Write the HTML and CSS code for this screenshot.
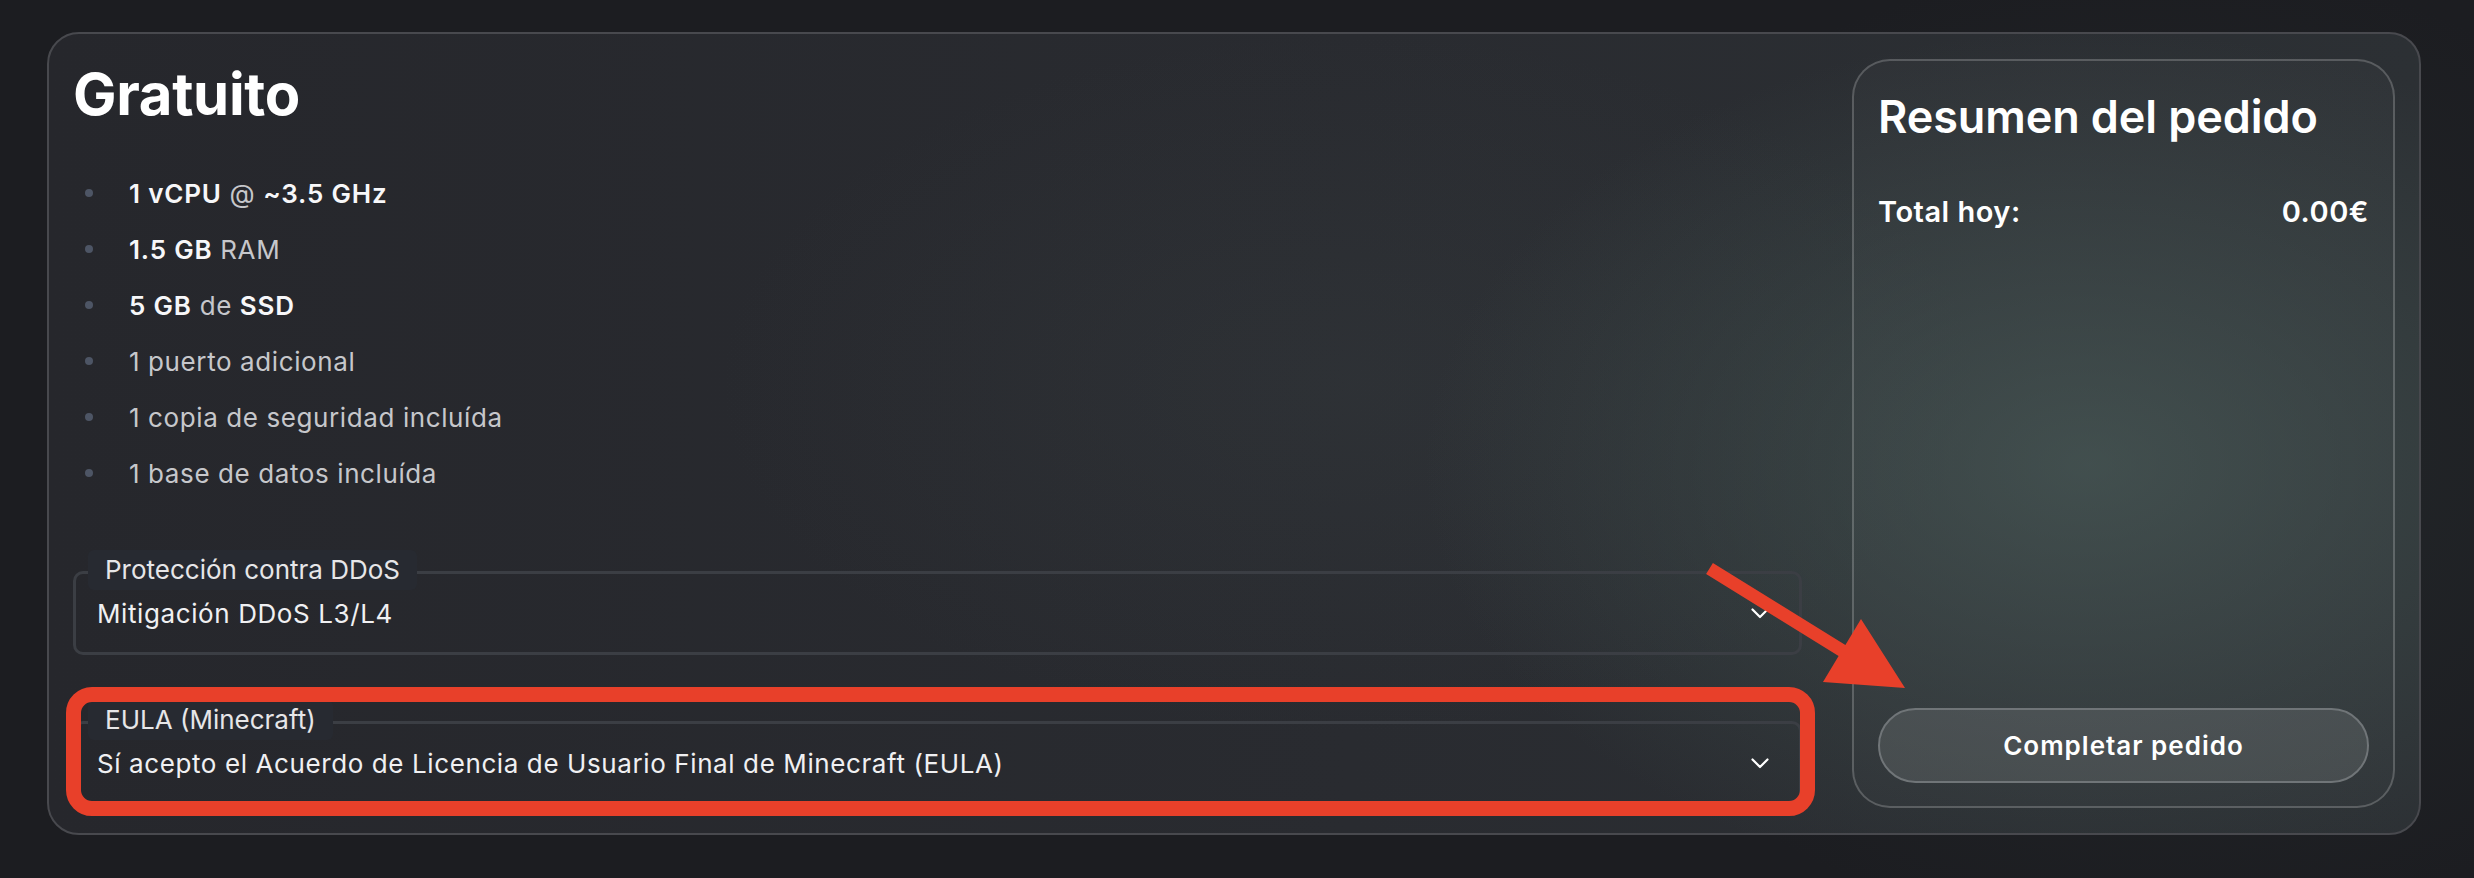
FILE: index.html
```html
<!DOCTYPE html>
<html lang="es">
<head>
<meta charset="utf-8">
<title>Pedido</title>
<link rel="stylesheet" href="styles.css">
</head>
<body>
<div class="card">
  <div class="main">
    <h1 class="plan">Gratuito</h1>
    <ul class="features">
      <li><span class="dot"></span><span><b>1 vCPU</b> @ <b>~3.5 GHz</b></span></li>
      <li><span class="dot"></span><span><b>1.5 GB</b> RAM</span></li>
      <li><span class="dot"></span><span><b>5 GB</b> de <b>SSD</b></span></li>
      <li><span class="dot"></span><span>1 puerto adicional</span></li>
      <li><span class="dot"></span><span>1 copia de seguridad incluída</span></li>
      <li><span class="dot"></span><span>1 base de datos incluída</span></li>
    </ul>
    <fieldset class="field field-ddos">
      <legend><span class="legend-text">Protección contra DDoS</span></legend>
      <div class="select">
        <span class="select-value">Mitigación DDoS L3/L4</span>
        <svg class="chev" width="18" height="11" viewBox="0 0 18 11"><path d="M1.5 1.5 L9 9 L16.5 1.5" fill="none" stroke="#ffffff" stroke-width="2.2" stroke-linecap="round" stroke-linejoin="round"/></svg>
      </div>
    </fieldset>
    <div class="highlight">
      <fieldset class="field">
        <legend><span class="legend-text">EULA (Minecraft)</span></legend>
        <div class="select">
          <span class="select-value">Sí acepto el Acuerdo de Licencia de Usuario Final de Minecraft (EULA)</span>
          <svg class="chev" width="18" height="11" viewBox="0 0 18 11"><path d="M1.5 1.5 L9 9 L16.5 1.5" fill="none" stroke="#ffffff" stroke-width="2.2" stroke-linecap="round" stroke-linejoin="round"/></svg>
        </div>
      </fieldset>
    </div>
  </div>
  <aside class="summary">
    <h2 class="summary-title">Resumen del pedido</h2>
    <div class="total"><span>Total hoy:</span><span>0.00€</span></div>
    <button class="submit" type="button">Completar pedido</button>
  </aside>
  <svg class="arrow" width="215" height="145" viewBox="0 0 215 145">
    <polygon points="15.9,11 148.4,93 164,67 208,136 126,130 141.6,104 9.1,22" fill="#e8402a"/>
  </svg>
</div>
</body>
</html>
```

FILE: styles.css
```css
* { box-sizing: border-box; }

html, body {
  margin: 0;
  padding: 0;
}

body {
  width: 2474px;
  height: 878px;
  overflow: hidden;
  background:
    radial-gradient(ellipse 900px 700px at 2150px 450px, rgba(50, 60, 60, 0.35), rgba(50, 60, 60, 0) 70%),
    #1c1d21;
  font-family: Inter, "Noto Sans", "Liberation Sans", sans-serif;
  color: #f2f2f4;
  padding: 32px 53px 0 47px;
}

.card {
  position: relative;
  height: 803px;
  border: 2px solid #48494e;
  border-radius: 32px;
  padding: 25px 24px 25px 24px;
  display: grid;
  grid-template-columns: 1fr 543px;
  column-gap: 50px;
  background:
    radial-gradient(ellipse 950px 620px at 2040px 430px, rgba(74, 94, 90, 0.6), rgba(74, 94, 90, 0) 70%),
    radial-gradient(ellipse 900px 500px at 1300px 350px, rgba(60, 68, 70, 0.25), rgba(60, 68, 70, 0) 70%),
    linear-gradient(90deg, #26272c 0%, #292b30 55%, #2c3034 100%);
}

.main {
  min-width: 0;
  display: flex;
  flex-direction: column;
}

.plan {
  margin: 0;
  font-size: 58px;
  line-height: 70px;
  font-weight: 700;
  color: #ffffff;
  letter-spacing: -0.3px;
}

.features {
  list-style: none;
  margin: 36px 0 0 0;
  padding: 0;
}

.features li {
  display: flex;
  align-items: center;
  height: 56px;
  font-size: 26px;
  color: #c6c7cb;
  letter-spacing: 0.6px;
}

.features li b {
  font-weight: 600;
  color: #f7f7f9;
  letter-spacing: 0.8px;
}

.dot {
  width: 8px;
  height: 8px;
  border-radius: 50%;
  background: #4d5565;
  margin-left: 12px;
  margin-right: 36px;
  flex: none;
}

.field {
  margin: 0;
  padding: 0;
  min-width: 0;
  border: 3px solid #3b3e44;
  border-radius: 10px;
}

.field-ddos {
  margin-top: 49px;
}

.field legend {
  padding: 0 0 5px 0;
  margin-left: 12px;
}

.legend-text {
  display: block;
  height: 40px;
  line-height: 40px;
  padding: 0 17px;
  background: #272a31;
  border-radius: 6px;
  font-size: 26px;
  color: #e6e6e8;
}

.select {
  display: flex;
  align-items: center;
  justify-content: space-between;
  padding: 3px 30px 23px 21px;
}

.select-value {
  font-size: 26px;
  line-height: 31px;
  color: #f0f0f2;
  letter-spacing: 0.6px;
}

.chev {
  flex: none;
  margin-top: 0;
}

.highlight {
  position: relative;
  margin-top: 45px;
}

.highlight::after {
  content: "";
  position: absolute;
  left: -7px;
  top: -13px;
  right: -13px;
  bottom: -11px;
  border: 15px solid #e8402a;
  border-radius: 26px;
  pointer-events: none;
}

.summary {
  display: flex;
  flex-direction: column;
  border: 2px solid rgba(255, 255, 255, 0.2);
  border-radius: 38px;
  padding: 28px 24px 23px 24px;
  background: rgba(255, 255, 255, 0.025);
}

.summary-title {
  margin: 0;
  font-size: 45px;
  line-height: 55px;
  font-weight: 600;
  color: #ffffff;
  letter-spacing: -0.1px;
}

.total {
  display: flex;
  justify-content: space-between;
  margin-top: 50px;
  font-size: 29px;
  line-height: 35px;
  font-weight: 600;
  color: #ffffff;
  letter-spacing: 0.5px;
}

.submit {
  margin-top: auto;
  height: 75px;
  width: 100%;
  border-radius: 38px;
  border: 2px solid #707578;
  background: rgba(255, 255, 255, 0.1);
  color: #ffffff;
  font-family: Inter, "Noto Sans", "Liberation Sans", sans-serif;
  font-size: 26px;
  font-weight: 600;
  letter-spacing: 1px;
  cursor: pointer;
}

.arrow {
  position: absolute;
  left: 1648px;
  top: 518px;
}
```
